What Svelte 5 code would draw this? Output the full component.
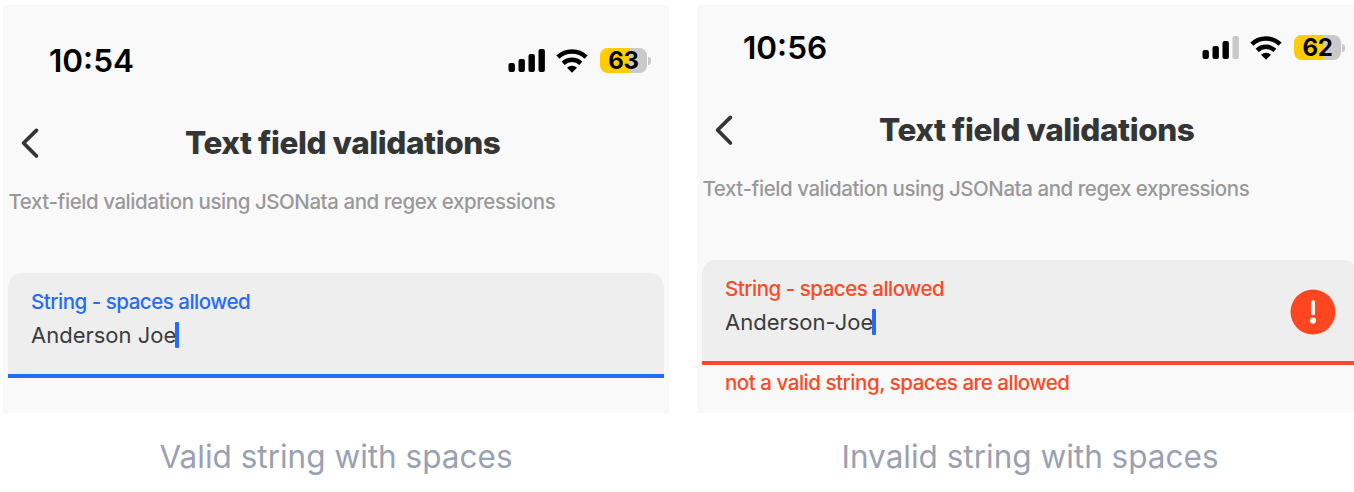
<script>
  const screens = [
    { time: '10:54', bars: 4, battery: 63, value: 'Anderson Joe', error: '', caption: 'Valid string with spaces' },
    { time: '10:56', bars: 3, battery: 62, value: 'Anderson-Joe', error: 'not a valid string, spaces are allowed', caption: 'Invalid string with spaces' }
  ];
  const barShapes = [
    { x: 0, y: 14, h: 9 },
    { x: 10, y: 10, h: 13 },
    { x: 20, y: 5, h: 18 },
    { x: 30, y: 0, h: 23 }
  ];
</script>

<main>
  {#each screens as s}
    <figure>
      <section class="screen" class:invalid={s.error}>
        <div class="status">
          <span class="time">{s.time}</span>
          <svg class="signal" width="37" height="23" viewBox="0 0 37 23">
            {#each barShapes as b, i}
              <rect x={b.x + 0.5} y={b.y} width="6.4" height={b.h} rx="2" fill={i < s.bars ? '#000' : '#c8c8c8'} />
            {/each}
          </svg>
          <svg class="wifi" width="32" height="24" viewBox="0 0 32 24" fill="none" stroke="#000" stroke-width="4.4">
            <path d="M1.9 8.2A20.3 20.3 0 0 1 30.1 8.2" />
            <path d="M7.2 14.4A12.6 12.6 0 0 1 24.8 14.4" />
            <path d="M16 23.8L11 18.8A7 7 0 0 1 21 18.8Z" fill="#000" stroke="none" />
          </svg>
          <div class="battery">
            <div class="cell" style="--charge: {s.battery}%">
              <span class="level">{s.battery}</span>
            </div>
            <div class="tip"></div>
          </div>
        </div>
        <header>
          <svg class="back" width="20" height="32" viewBox="0 0 20 32" fill="none" stroke="#343636" stroke-width="3.8" stroke-linecap="round" stroke-linejoin="round">
            <path d="M16.4 3.4L3.6 16L16.4 29" />
          </svg>
          <h1>Text field validations</h1>
        </header>
        <p class="intro">Text-field validation using JSONata and regex expressions</p>
        <div class="field">
          <div class="content">
            <span class="label">String - spaces allowed</span>
            <span class="value">{s.value}<i class="caret"></i></span>
          </div>
          {#if s.error}
            <svg class="alert" width="46" height="46" viewBox="0 0 46 46">
              <circle cx="23" cy="23" r="22.5" fill="#ff4621" />
              <path d="M23 13V24.3" stroke="#f4f4f4" stroke-width="4" stroke-linecap="round" />
              <circle cx="23" cy="31.6" r="3.1" fill="#f4f4f4" />
            </svg>
          {/if}
        </div>
        {#if s.error}<p class="error">{s.error}</p>{/if}
      </section>
      <figcaption>{s.caption}</figcaption>
    </figure>
  {/each}
</main>

<style>
  :global(body) { background: #fff; overflow: hidden; }
  main {
    display: flex;
    gap: 28px;
    width: 1354px;
    height: 492px;
    padding: 5px 0 0 3px;
    box-sizing: border-box;
    overflow: hidden;
    font-family: Inter, "Liberation Sans", sans-serif;
  }
  figure { margin: 0; flex: none; width: 666px; }
  .screen {
    height: 408px;
    box-sizing: border-box;
    padding-top: 35px;
    background: #f9f9f9;
    overflow: hidden;
    --accent: #246bfd;
  }
  .screen.invalid { padding-top: 22px; --accent: #fb4a25; }
  .status { display: flex; align-items: center; height: 41px; padding: 0 18px 0 46px; }
  .time { flex: 1; font-size: 31.5px; line-height: 38px; font-weight: 600; color: #000; }
  .signal { margin-right: 11px; }
  .wifi { margin-right: 12px; }
  .battery { display: flex; align-items: center; gap: 1px; }
  .cell {
    display: flex;
    justify-content: center;
    align-items: center;
    width: 47px;
    height: 25px;
    border-radius: 7.5px;
    background: linear-gradient(to right, #ffcc02 var(--charge), #c9c9c9 var(--charge));
  }
  .level { font-size: 24px; line-height: 30px; font-weight: 700; letter-spacing: -0.4px; color: #000; }
  .tip { width: 3px; height: 8px; border-radius: 0 3px 3px 0; background: #c9c9c9; }
  header { display: flex; align-items: center; height: 38px; margin-top: 43px; padding-left: 17px; }
  .back { flex: none; }
  h1 { margin: 0; flex: 1; padding-left: 145px; font-size: 31.5px; line-height: 38px; font-weight: 800; letter-spacing: -0.42px; color: #343636; white-space: nowrap; }
  .intro { margin: 25px 0 0 5.5px; font-size: 20.5px; line-height: 30px; letter-spacing: -0.445px; font-weight: 450; color: #999; white-space: nowrap; }
  .field {
    display: flex;
    justify-content: space-between;
    margin: 56px 5px 0;
    height: 105px;
    box-sizing: border-box;
    padding: 13px 22px 0 23px;
    border-radius: 14px 14px 0 0;
    border-bottom: 4px solid var(--accent);
    background: #eee;
  }
  .content { display: flex; flex-direction: column; padding-top: 1px; }
  .label { font-size: 20.5px; line-height: 30px; letter-spacing: -0.48px; font-weight: 450; color: var(--accent); white-space: nowrap; }
  .value { display: flex; align-items: center; margin-top: 2px; font-size: 22px; line-height: 32px; color: #3c3c3c; white-space: pre; }
  .caret { width: 4px; height: 26px; border-radius: 1px; background: #246bfd; margin-left: -1.6px; }
  .alert { margin-top: 16px; }
  .error { margin: 3px 0 0 28px; font-size: 20.5px; line-height: 30px; letter-spacing: -0.46px; font-weight: 450; color: var(--accent); white-space: nowrap; }
  figcaption { margin-top: 24px; text-align: center; font-size: 31.5px; line-height: 40px; color: #9aa1b0; white-space: nowrap; }
</style>
